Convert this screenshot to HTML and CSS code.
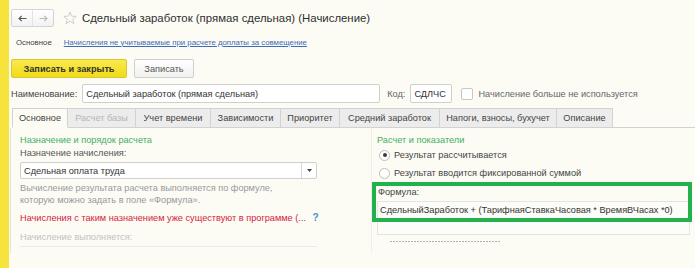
FILE: index.html
```html
<!DOCTYPE html>
<html lang="ru">
<head>
<meta charset="utf-8">
<link rel="stylesheet" href="styles.css">
</head>
<body>
<div class="app">
  <div class="stripe"></div>
  <div class="main">
    <div class="titlebar">
      <div class="nav">
        <span class="nav-btn"><svg width="9" height="7" viewBox="0 0 9 7"><path d="M8.5 3.5 H1 M3.8 0.8 L1 3.5 L3.8 6.2" fill="none" stroke="#555" stroke-width="1.1"/></svg></span>
        <span class="nav-btn"><svg width="9" height="7" viewBox="0 0 9 7"><path d="M0.5 3.5 H8 M5.2 0.8 L8 3.5 L5.2 6.2" fill="none" stroke="#b9b9b9" stroke-width="1.1"/></svg></span>
      </div>
      <svg class="star" width="14" height="14" viewBox="0 0 14 14"><path d="M7 1 L8.7 5.2 L13.2 5.4 L9.7 8.3 L10.9 12.7 L7 10.2 L3.1 12.7 L4.3 8.3 L0.8 5.4 L5.3 5.2 Z" fill="none" stroke="#c9c9c9" stroke-width="0.9" stroke-linejoin="round"/></svg>
      <h1 class="title">Сдельный заработок (прямая сдельная) (Начисление)</h1>
    </div>
    <div class="sections">
      <span class="sec-main">Основное</span>
      <a class="sec-link">Начисления не учитываемые при расчете доплаты за совмещение</a>
    </div>
    <div class="toolbar">
      <button class="btn btn-primary">Записать и закрыть</button>
      <button class="btn btn-plain">Записать</button>
    </div>
    <div class="namerow">
      <span class="lbl">Наименование:</span>
      <div class="input name-input">Сдельный заработок (прямая сдельная)</div>
      <span class="lbl code-lbl">Код:</span>
      <div class="input code-input">СДЛЧС</div>
      <span class="checkbox"></span>
      <span class="lbl chk-lbl">Начисление больше не используется</span>
    </div>
    <div class="tabs">
      <span class="tab active">Основное</span>
      <span class="tab disabled">Расчет базы</span>
      <span class="tab">Учет времени</span>
      <span class="tab">Зависимости</span>
      <span class="tab">Приоритет</span>
      <span class="tab">Средний заработок</span>
      <span class="tab">Напоги, взносы, бухучет</span>
      <span class="tab">Описание</span>
      <span class="tab-fill"></span>
    </div>
    <div class="panel">
      <div class="col-left">
        <div class="group-title">Назначение и порядок расчета</div>
        <div class="field-lbl">Назначение начисления:</div>
        <div class="select">
          <span class="select-text">Сдельная оплата труда</span>
          <span class="select-btn"><svg width="5" height="3" viewBox="0 0 5 3"><path d="M0 0 H5 L2.5 3 Z" fill="#444"/></svg></span>
        </div>
        <div class="hint">Вычисление результата расчета выполняется по формуле,<br>которую можно задать в поле «Формула».</div>
        <div class="warn">Начисления с таким назначением уже существуют в программе (... <span class="q">?</span></div>
        <div class="dim-field">Начисление выполняется:</div>
      </div>
      <div class="col-right">
        <div class="group-title">Расчет и показатели</div>
        <div class="radio-row"><span class="radio on"></span>Результат рассчитывается</div>
        <div class="radio-row second"><span class="radio"></span>Результат вводится фиксированной суммой</div>
        <div class="formula">
          <div class="formula-lbl">Формула:</div>
          <div class="formula-box">СдельныйЗаработок + (ТарифнаяСтавкаЧасовая * ВремяВЧасах *0)</div>
          <div class="highlight"></div>
        </div>
        <div class="dotline"></div>
      </div>
    </div>
  </div>
</div>
</body>
</html>
```
FILE: styles.css
```css
* { box-sizing: border-box; }
html, body { margin: 0; padding: 0; }
body {
  background: #fcfcf5;
  font-family: "Liberation Sans", Arial, sans-serif;
  font-size: 9.2px;
  color: #333;
  width: 695px;
  height: 268px;
  overflow: hidden;
}
.app { display: flex; height: 268px; }
.stripe { width: 9px; background: #f6e33c; flex: none; }
.main { flex: 1; padding-left: 2px; position: relative; white-space: nowrap; }

.titlebar { display: flex; align-items: center; height: 18px; margin-top: 9px; }
.nav {
  display: flex; width: 43px; height: 18px;
  border: 1px solid #d4d4d4; border-radius: 2px;
  background: linear-gradient(#ffffff, #f2f2f2);
}
.nav-btn { flex: 1; display: flex; align-items: center; justify-content: center; }
.nav-btn + .nav-btn { border-left: 1px solid #e3e3e3; }
.star { margin-left: 9px; }
.title { margin: 0 0 0 5px; font-size: 11.4px; font-weight: normal; color: #2f2f2f; }

.sections { display: flex; align-items: center; height: 12px; margin-top: 9px; padding-left: 5px; font-size: 7.8px; }
.sec-main { color: #444; }
.sec-link { margin-left: 12px; color: #3d6bb5; text-decoration: underline; }

.toolbar { display: flex; gap: 7px; margin-top: 11px; height: 19px; }
.btn {
  font-family: inherit; font-size: 9.2px; color: #444;
  height: 19px; padding: 0;
  border: 1px solid #cfcfcf; border-radius: 2px;
  background: linear-gradient(#ffffff, #f1f1f1);
}
.btn-primary {
  width: 116px; font-weight: bold; color: #333;
  background: linear-gradient(#f9ea4d, #f1db16);
  border-color: #d8c53a;
}
.btn-plain { width: 60px; color: #555; }

.namerow { display: flex; align-items: center; margin-top: 6px; height: 19px; }
.lbl { color: #444; }
.input {
  height: 19px; border: 1px solid #cfcfcf; border-radius: 2px; background: #fff;
  display: flex; align-items: center; padding-left: 3px; color: #333;
}
.name-input { width: 298px; margin-left: 5px; }
.code-lbl { margin-left: 7px; color: #666; }
.code-input { width: 42px; margin-left: 5px; }
.checkbox { width: 12px; height: 12px; border: 1px solid #c7c7c7; border-radius: 2px; background: #fff; margin-left: 9px; }
.chk-lbl { margin-left: 5px; color: #666; }

.tabs { display: flex; margin-top: 5px; height: 20px; padding-left: 1px; }
.tab {
  display: flex; align-items: center; justify-content: center;
  border: 1px solid #d2d2d2; border-left: none; background: #ececec; color: #444;
  height: 20px;
}
.tab:first-child { border-left: 1px solid #d2d2d2; }
.tab.active { background: #fcfcf5; border-bottom-color: transparent; width: 56px; }
.tab.disabled { color: #b5b5b5; }
.tab-fill { flex: 1; border-bottom: 1px solid #d2d2d2; }
.tabs .tab:nth-child(2) { width: 68px; }
.tabs .tab:nth-child(3) { width: 75px; }
.tabs .tab:nth-child(4) { width: 70px; }
.tabs .tab:nth-child(5) { width: 59px; }
.tabs .tab:nth-child(6) { width: 100px; }
.tabs .tab:nth-child(7) { width: 117px; }
.tabs .tab:nth-child(8) { width: 56px; }

.panel {
  display: flex; border-left: 1px solid #e3e3e3; margin-left: -1px; height: 125px;
  padding-top: 6px;
}
.col-left { width: 360px; padding-left: 9px; }
.col-right { flex: 1; padding-left: 5px; border-left: 1px solid #efefea; margin-top: -6px; padding-top: 6px; }
.group-title { color: #3fae62; height: 12px; line-height: 12px; }
.field-lbl { color: #555; margin-top: 1px; height: 12px; line-height: 12px; }
.select {
  display: flex; width: 297px; height: 17px; margin-top: 3px;
  border: 1px solid #cfcfcf; border-radius: 2px; background: #fff;
}
.select-text { flex: 1; padding-left: 3px; display: flex; align-items: center; color: #333; }
.select-btn { width: 15px; border-left: 1px solid #d6d6d6; display: flex; align-items: center; justify-content: center; }
.hint { color: #999; margin-top: 3px; line-height: 12px; }
.warn { color: #d5213c; margin-top: 6px; height: 12px; line-height: 12px; }
.q { color: #4a90c8; margin-left: 4px; font-size: 10px; font-weight: bold; }
.dim-field {
  color: #c2c2c2; margin-top: 7px; height: 12px; line-height: 12px;
  width: 297px; border-bottom: 1px solid #ebebeb; padding-bottom: 3px; box-sizing: content-box;
}

.radio-row { display: flex; align-items: center; color: #444; height: 12px; margin-top: 3px; }
.radio-row.second { margin-top: 6px; }
.radio {
  width: 11px; height: 11px; border: 1px solid #bdbdbd; border-radius: 50%; background: #fff;
  margin-left: 2px; margin-right: 4px; display: flex; align-items: center; justify-content: center;
}
.radio.on::after { content: ""; width: 4px; height: 4px; border-radius: 50%; background: #3c3c3c; }
.formula { position: relative; margin-top: 7px; margin-right: 5px; }
.formula-lbl { color: #444; height: 12px; line-height: 12px; margin-left: 1px; }
.formula-box {
  margin-top: 3px; height: 34px; border: 1px solid #e4e4e4; background: #fcfcf8;
  padding: 3px 2px; color: #333; overflow: hidden;
}
.highlight {
  position: absolute; left: -5px; top: -4px; right: -2px; height: 40px;
  border: 4px solid #22b14c;
}
.dotline {
  height: 1px; margin: 6px 0 0 13px; width: 110px;
  background: repeating-linear-gradient(90deg, #b0b0b0 0 2px, transparent 2px 3px);
}
```
